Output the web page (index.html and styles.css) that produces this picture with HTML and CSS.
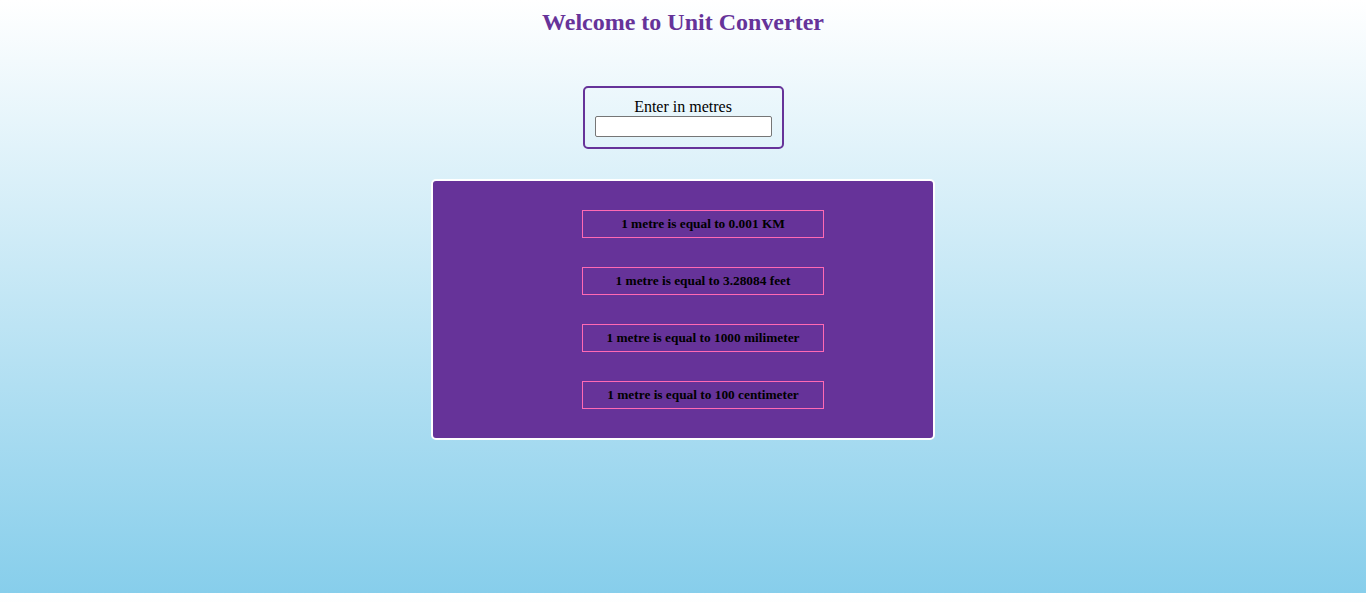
FILE: index.html
```html
<!DOCTYPE html>
<html>
<head>
<meta charset="utf-8">
<link rel="stylesheet" href="styles.css">
</head>
<body>
<h1 class="title">Welcome to Unit Converter</h1>
<div class="entry">
  <label class="entry-label" for="m">Enter in metres</label>
  <input class="entry-input" id="m" type="text">
</div>
<div class="results">
  <div class="result">1 metre is equal to 0.001 KM</div>
  <div class="result">1 metre is equal to 3.28084 feet</div>
  <div class="result">1 metre is equal to 1000 milimeter</div>
  <div class="result">1 metre is equal to 100 centimeter</div>
</div>
</body>
</html>
```
FILE: styles.css
```css
html {
  height: 593px;
  background: linear-gradient(to bottom, #ffffff, #87ceeb);
}
body {
  margin: 0;
  padding-top: 8px;
  font-family: "Liberation Serif", "Times New Roman", serif;
  display: flex;
  flex-direction: column;
  align-items: center;
}
.title {
  margin: 0;
  font-size: 24px;
  font-weight: bold;
  color: #663399;
  line-height: 28px;
}
.entry {
  margin-top: 50px;
  width: 201px;
  height: 63px;
  box-sizing: border-box;
  border: 2px solid #663399;
  border-radius: 5px;
  display: flex;
  flex-direction: column;
  align-items: center;
  padding-top: 10px;
}
.entry-label {
  font-size: 16px;
  line-height: 18px;
  color: #000;
}
.entry-input {
  width: 177px;
  height: 21px;
  box-sizing: border-box;
  border: 1px solid #767676;
  border-radius: 2px;
  background: #fff;
  padding: 1px 2px;
}
.results {
  margin-top: 30px;
  width: 504px;
  box-sizing: border-box;
  border: 2px solid #fff;
  border-radius: 5px;
  background: #663399;
  display: flex;
  flex-direction: column;
  align-items: center;
  gap: 29px;
  padding: 29px 0 29px 40px;
}
.result {
  width: 242px;
  height: 28px;
  box-sizing: border-box;
  border: 1px solid #ff69b4;
  display: flex;
  align-items: center;
  justify-content: center;
  font-size: 13.33px;
  font-weight: bold;
  color: #000;
}
```
